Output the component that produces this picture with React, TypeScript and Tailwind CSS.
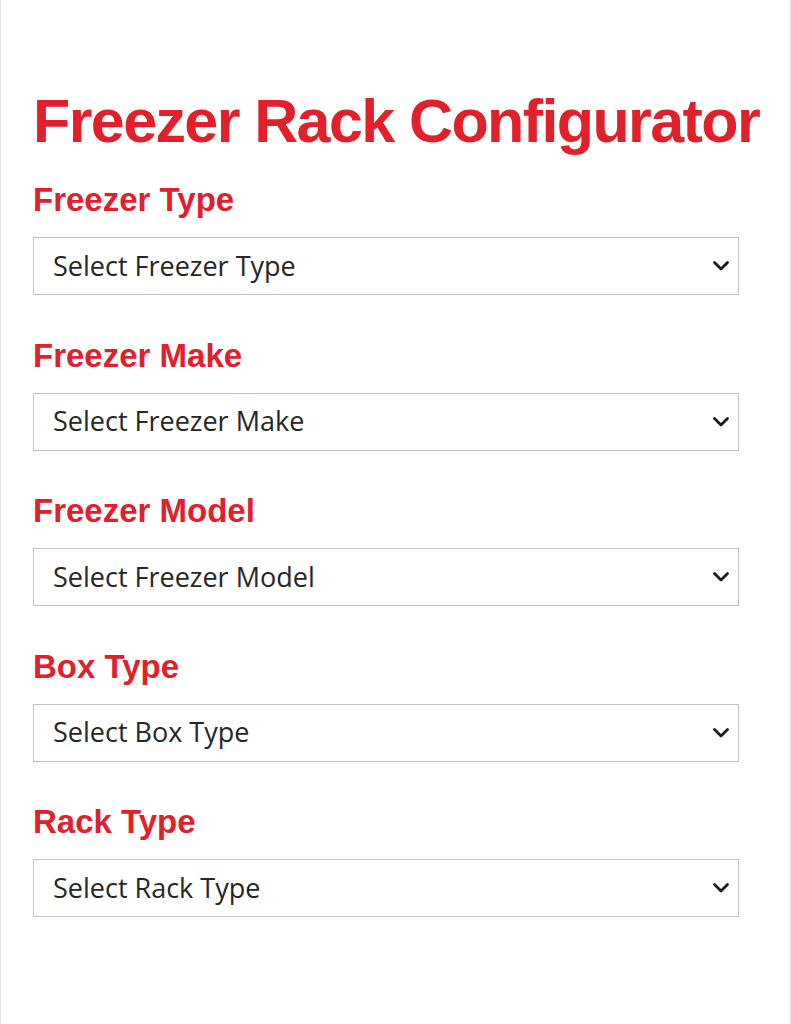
const fields = [
  { label: 'Freezer Type', placeholder: 'Select Freezer Type' },
  { label: 'Freezer Make', placeholder: 'Select Freezer Make' },
  { label: 'Freezer Model', placeholder: 'Select Freezer Model' },
  { label: 'Box Type', placeholder: 'Select Box Type' },
  { label: 'Rack Type', placeholder: 'Select Rack Type' },
];

function Chevron() {
  return (
    <svg width="18" height="12" viewBox="0 0 18 12" fill="none" className="shrink-0">
      <path d="M2.5 2.5 L9 9 L15.5 2.5" stroke="#1a1a1a" strokeWidth="2.8" strokeLinecap="round" strokeLinejoin="round" />
    </svg>
  );
}

export default function App() {
  return (
    <div className="w-[791px] min-h-screen bg-white border-x border-[#e4e4e4] font-['Liberation_Sans',Arial,sans-serif]">
      <div className="pl-[32px] pt-[91px] pb-[100px]">
        <h1 className="text-[61px] leading-none font-bold tracking-[-1.6px] text-[#e2202c] whitespace-nowrap">
          Freezer Rack Configurator
        </h1>

        <div className="flex flex-col mt-[31px] gap-[43.5px]">
          {fields.map((f) => (
            <div key={f.label} className="flex flex-col gap-[21px]">
              <label className="text-[33px] leading-none font-bold text-[#e2202c]">
                {f.label}
              </label>
              <div className="w-[706px] h-[58px] border-[1.5px] border-[#c2c2c2] bg-white flex items-center justify-between pl-[19px] pr-[8px]">
                <span className="font-['Open_Sans',sans-serif] text-[27px] text-[#262626]">
                  {f.placeholder}
                </span>
                <Chevron />
              </div>
            </div>
          ))}
        </div>
      </div>
    </div>
  );
}
